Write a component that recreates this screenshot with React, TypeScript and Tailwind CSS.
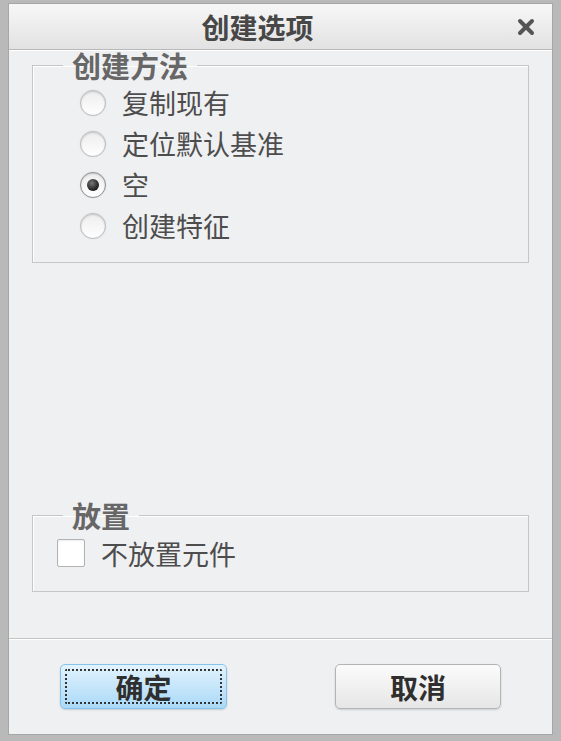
import { X } from 'lucide-react';

const options = ['复制现有', '定位默认基准', '空', '创建特征'];

function Radio({ checked }: { checked: boolean }) {
    return (
        <span
            className={
                'flex h-[26px] w-[26px] shrink-0 items-center justify-center rounded-full border bg-gradient-to-b from-[#ededed] to-white shadow-[inset_0_1px_2px_rgba(0,0,0,0.15),0_0_1px_rgba(0,0,0,0.2)] ' +
                (checked ? 'border-[#8f8f8f]' : 'border-[#bdbdbd]')
            }
        >
            {checked && (
                <span className="h-[12px] w-[12px] rounded-full bg-[radial-gradient(circle_at_40%_35%,#777,#1c1c1c_70%)]" />
            )}
        </span>
    );
}

export default function App() {
    return (
        <div
            className="flex h-[741px] w-[561px] flex-col bg-[#b9b9b9] px-[8px] pt-[3px] pb-[6px]"
            style={{ fontFamily: '"Noto Sans CJK SC", "Noto Sans", sans-serif' }}
        >
            <div className="flex flex-1 flex-col border border-[#a6a6a6] bg-[#eff0f2]">
                {/* Title bar */}
                <div className="relative flex h-[46px] shrink-0 items-center justify-center border-b border-[#b9b9b9] bg-gradient-to-b from-[#f7f7f7] to-[#e2e2e2] pr-[46px] shadow-[0_1px_0_#fff]">
                    <span className="text-[28px] font-bold leading-none text-[#474747]">创建选项</span>
                    <X className="absolute top-[11px] right-[14px] h-[24px] w-[24px] text-[#555]" strokeWidth={4} />
                </div>

                {/* 创建方法 */}
                <fieldset className="mx-[23px] mt-[1px] border border-[#c5c6c8] pb-[16px] shadow-[inset_1px_1px_0_#fff]">
                    <legend className="ml-[30px] px-[9px] text-[29px] leading-[28px] font-bold text-[#676767]">
                        创建方法
                    </legend>
                    <div className="flex flex-col pt-[3px] pl-[47px]">
                        {options.map((label, i) => (
                            <label key={label} className="flex h-[41px] items-center gap-[16px]">
                                <Radio checked={i === 2} />
                                <span className="text-[27px] leading-none text-[#4d4d4d]">{label}</span>
                            </label>
                        ))}
                    </div>
                </fieldset>

                {/* 放置 */}
                <fieldset className="mx-[23px] mt-[238px] border border-[#c5c6c8] pb-[16px] shadow-[inset_1px_1px_0_#fff]">
                    <legend className="ml-[30px] px-[9px] text-[29px] leading-[28px] font-bold text-[#676767]">
                        放置
                    </legend>
                    <label className="flex h-[46px] items-center gap-[16px] pt-[2px] pl-[24px]">
                        <span className="h-[28px] w-[28px] shrink-0 rounded-[2px] border border-[#b3b3b3] bg-white shadow-[inset_0_1px_2px_rgba(0,0,0,0.08)]" />
                        <span className="text-[27px] leading-none text-[#4d4d4d]">不放置元件</span>
                    </label>
                </fieldset>

                {/* Footer */}
                <div className="mt-[46px] flex flex-1 items-start justify-between border-t border-[#c4c4c4] px-[51px] pt-[25px] shadow-[inset_0_1px_0_#fff]">
                    <button className="flex h-[45px] w-[167px] items-center justify-center rounded-[5px] border border-[#86c3ec] bg-gradient-to-b from-[#e3f3fd] to-[#a9d9f7] p-[4px] shadow-[0_1px_2px_rgba(0,0,0,0.15)]">
                        <span className="flex h-full w-full items-center justify-center rounded-[2px] border-2 border-dotted border-[#333]">
                            <span className="text-[28px] leading-none font-bold text-[#2f2f2f]">确定</span>
                        </span>
                    </button>
                    <button className="flex h-[45px] w-[166px] items-center justify-center rounded-[5px] border border-[#b4b4b4] bg-gradient-to-b from-[#fbfbfb] to-[#e6e6e6] shadow-[0_1px_2px_rgba(0,0,0,0.15)]">
                        <span className="text-[28px] leading-none font-bold text-[#2f2f2f]">取消</span>
                    </button>
                </div>
            </div>
        </div>
    );
}
